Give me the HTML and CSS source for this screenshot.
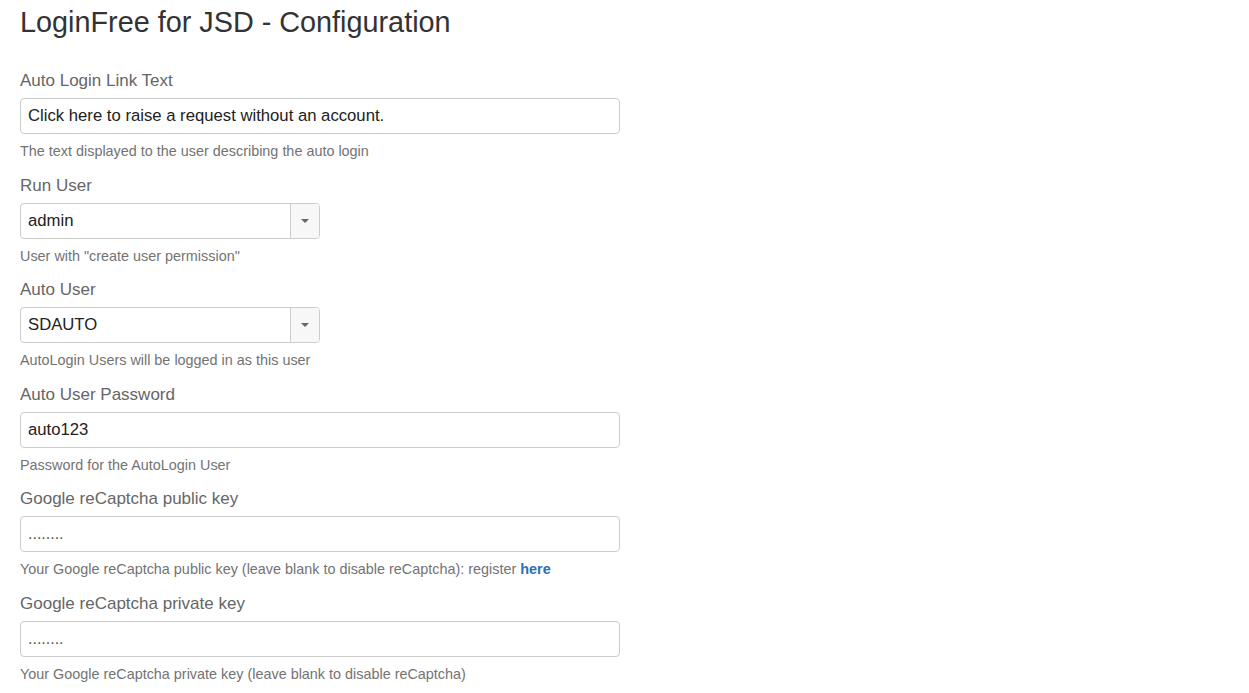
FILE: index.html
```html
<!DOCTYPE html>
<html lang="en">

<head>
    <meta charset="UTF-8">
    <title>LoginFree for JSD - Configuration</title>
    <link rel="stylesheet" href="styles.css">
</head>

<body>
    <div class="container">
        <h1>LoginFree for JSD - Configuration</h1>

        <form class="config-form">
            <div class="form-group">
                <label for="linkText">Auto Login Link Text</label>
                <input type="text" id="linkText" class="form-control" value="Click here to raise a request without an account.">
                <p class="help">The text displayed to the user describing the auto login</p>
            </div>

            <div class="form-group">
                <label>Run User</label>
                <div class="select-box">
                    <span class="select-value">admin</span>
                    <span class="select-arrow"><i class="caret"></i></span>
                </div>
                <p class="help">User with "create user permission"</p>
            </div>

            <div class="form-group">
                <label>Auto User</label>
                <div class="select-box">
                    <span class="select-value">SDAUTO</span>
                    <span class="select-arrow"><i class="caret"></i></span>
                </div>
                <p class="help">AutoLogin Users will be logged in as this user</p>
            </div>

            <div class="form-group">
                <label for="autoPass">Auto User Password</label>
                <input type="text" id="autoPass" class="form-control" value="auto123">
                <p class="help">Password for the AutoLogin User</p>
            </div>

            <div class="form-group">
                <label for="publicKey">Google reCaptcha public key</label>
                <input type="text" id="publicKey" class="form-control dots" value="........">
                <p class="help">Your Google reCaptcha public key (leave blank to disable reCaptcha): register <a href="#">here</a></p>
            </div>

            <div class="form-group">
                <label for="privateKey">Google reCaptcha private key</label>
                <input type="text" id="privateKey" class="form-control dots" value="........">
                <p class="help">Your Google reCaptcha private key (leave blank to disable reCaptcha)</p>
            </div>
        </form>
    </div>
</body>

</html>
```

FILE: styles.css
```css
* {
    margin: 0;
    padding: 0;
    box-sizing: border-box;
    font-family: "Liberation Sans", Arial, sans-serif;
}

body {
    background: #fff;
    color: #333;
}

.container {
    padding: 7px 20px 0;
}

h1 {
    font-size: 28.8px;
    font-weight: normal;
    line-height: 31px;
    color: #333;
    margin-bottom: 33px;
}

.form-group {
    margin-bottom: 14.6px;
}

.form-group label {
    display: block;
    font-size: 17px;
    line-height: 20px;
    color: #666;
    margin-bottom: 7px;
}

.form-control {
    display: block;
    width: 600px;
    height: 36px;
    padding: 0 7px;
    font-size: 16.7px;
    color: #222;
    border: 1px solid #ccc;
    border-radius: 4px;
    background: #fff;
    outline: none;
}

.form-control.dots {
    font-size: 16px;
    color: #555;
}

.select-box {
    display: flex;
    width: 300px;
    height: 36px;
    border: 1px solid #ccc;
    border-radius: 4px;
    overflow: hidden;
}

.select-value {
    flex: 1;
    padding: 0 7px;
    font-size: 16.7px;
    line-height: 34px;
    color: #222;
}

.select-arrow {
    width: 29px;
    border-left: 1px solid #ccc;
    background: #f7f7f7;
    display: flex;
    align-items: center;
    justify-content: center;
}

.caret {
    width: 0;
    height: 0;
    border-left: 4px solid transparent;
    border-right: 4px solid transparent;
    border-top: 4px solid #666;
}

.help {
    font-size: 14.4px;
    line-height: 20px;
    color: #737373;
    margin-top: 7px;
}

.help a {
    color: #2a6fb5;
    font-weight: bold;
    text-decoration: none;
}
```
